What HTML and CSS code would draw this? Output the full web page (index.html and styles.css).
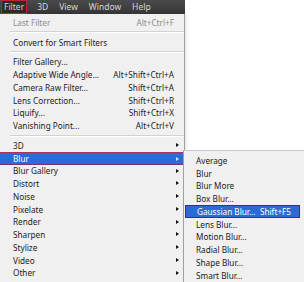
FILE: index.html
```html
<!DOCTYPE html>
<html lang="en">
<head>
    <meta charset="UTF-8">
    <title>Filter menu</title>
    <link rel="stylesheet" href="styles.css">
</head>
<body>
    <div class="screen">
        <div class="menubar">
            <span class="bar-item active">Filter</span>
            <span class="bar-item">3D</span>
            <span class="bar-item">View</span>
            <span class="bar-item">Window</span>
            <span class="bar-item">Help</span>
        </div>

        <div class="menu main-menu">
            <div class="row disabled"><span>Last Filter</span><span class="key">Alt+Ctrl+F</span></div>
            <div class="sep"></div>
            <div class="row"><span>Convert for Smart Filters</span></div>
            <div class="sep"></div>
            <div class="row"><span>Filter Gallery...</span></div>
            <div class="row"><span>Adaptive Wide Angle...</span><span class="key">Alt+Shift+Ctrl+A</span></div>
            <div class="row"><span>Camera Raw Filter...</span><span class="key">Shift+Ctrl+A</span></div>
            <div class="row"><span>Lens Correction...</span><span class="key">Shift+Ctrl+R</span></div>
            <div class="row"><span>Liquify...</span><span class="key">Shift+Ctrl+X</span></div>
            <div class="row"><span>Vanishing Point...</span><span class="key">Alt+Ctrl+V</span></div>
            <div class="sep"></div>
            <div class="row sub"><span>3D</span></div>
            <div class="row sub selected"><span>Blur</span></div>
            <div class="row sub"><span>Blur Gallery</span></div>
            <div class="row sub"><span>Distort</span></div>
            <div class="row sub"><span>Noise</span></div>
            <div class="row sub"><span>Pixelate</span></div>
            <div class="row sub"><span>Render</span></div>
            <div class="row sub"><span>Sharpen</span></div>
            <div class="row sub"><span>Stylize</span></div>
            <div class="row sub"><span>Video</span></div>
            <div class="row sub"><span>Other</span></div>
        </div>

        <!-- Blur submenu, opened over the page -->
        <div class="menu blur-menu">
            <div class="row"><span>Average</span></div>
            <div class="row"><span>Blur</span></div>
            <div class="row"><span>Blur More</span></div>
            <div class="row"><span>Box Blur...</span></div>
            <div class="row selected"><span>Gaussian Blur...</span><span class="key">Shift+F5</span></div>
            <div class="row"><span>Lens Blur...</span></div>
            <div class="row"><span>Motion Blur...</span></div>
            <div class="row"><span>Radial Blur...</span></div>
            <div class="row"><span>Shape Blur...</span></div>
            <div class="row"><span>Smart Blur...</span></div>
        </div>
    </div>
</body>
</html>
```

FILE: styles.css
```css
* {
    margin: 0;
    padding: 0;
    box-sizing: border-box;
}

body {
    background-color: #fff;
    font-family: 'Noto Sans', 'Open Sans', sans-serif;
    font-size: 8.2px;
    color: #1b1b1b;
}

.screen {
    position: relative;
    width: 304px;
    height: 282px;
    overflow: hidden;
}

.menubar {
    width: 185px;
    height: 14px;
    display: flex;
    align-items: center;
    gap: 7px;
    padding-left: 1px;
    background: linear-gradient(#4a4a4a, #353535);
    color: #d6d6d6;
    font-size: 8.5px;
}

.bar-item {
    padding: 0 2px;
    line-height: 12px;
}

.bar-item.active {
    border: 1px solid #c0242e;
    background-color: #2b2b2b;
    margin-right: 1px;
}

.menu {
    background-color: #f0f0f0;
}

.main-menu {
    width: 185px;
    height: 268px;
    padding-top: 2px;
    border-right: 1px solid #a0a0a0;
    box-shadow: 2px 0 2px rgba(0, 0, 0, 0.08);
}

.row {
    position: relative;
    height: 12.75px;
    display: flex;
    align-items: center;
    justify-content: space-between;
    padding: 0 10px 0 13px;
    white-space: nowrap;
}

.row.disabled {
    color: #8d8d8d;
}

.key {
    text-align: right;
}

.row.sub::after {
    content: "";
    position: absolute;
    right: 5px;
    top: 4px;
    border-left: 3px solid #111;
    border-top: 2.5px solid transparent;
    border-bottom: 2.5px solid transparent;
}

.row.selected {
    background-color: #2b6bd3;
    color: #fff;
}

.main-menu .row.selected {
    border-top: 1px solid #b3305c;
    border-bottom: 1px solid #7e2e6a;
}

.row.sub.selected::after {
    border-left-color: #cfe0ff;
}

.sep {
    height: 7px;
    margin-left: 10px;
    display: flex;
    flex-direction: column;
    justify-content: center;
}

.sep::before {
    content: "";
    display: block;
    height: 1px;
    background-color: #d2d2d2;
    border-bottom: 1px solid #fff;
    box-sizing: content-box;
}

.blur-menu {
    position: absolute;
    left: 183px;
    top: 150px;
    width: 121px;
    height: 132px;
    padding-top: 3px;
    border-left: 1px solid #a0a0a0;
    border-top: 1px solid #c8c8c8;
}

.blur-menu .row {
    padding: 0 8px 0 12px;
    margin-right: 4px;
}

.blur-menu .row.selected {
    margin-left: 1px;
    padding-left: 11px;
    border: 1px solid #3a2f7a;
}
```
